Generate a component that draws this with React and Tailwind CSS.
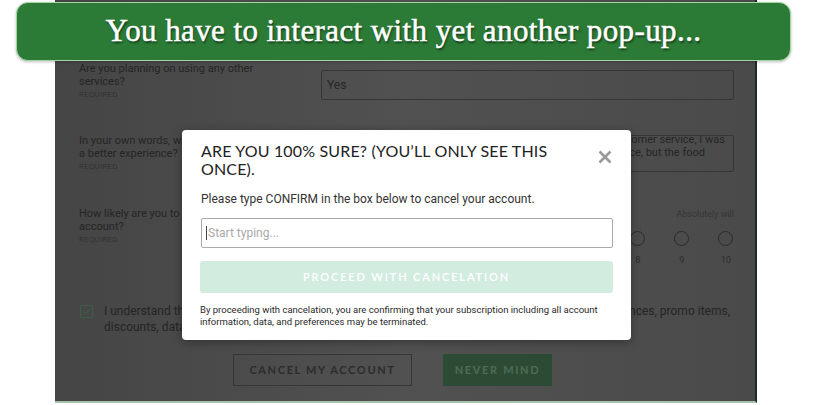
import React from "react";

// Dimmed form behind the modal (colours already include the dark overlay)
const labelCls = "text-[11px] leading-[13px] text-[#252525]";
const requiredCls = "mt-[2px] text-[8px] leading-[10px] tracking-wide text-[#333333]";

const Radio = ({ n }) => (
  <div className="flex w-[16px] flex-col items-center">
    <span className="h-[15px] w-[15px] rounded-full border border-[#2b2b2b]" />
    <span className="mt-[9px] text-[9px] leading-[10px] text-[#2e2e2e]">{n}</span>
  </div>
);

const BackgroundForm = () => (
  <div className="ml-[55px] h-[403px] w-[702px] border-r-2 border-b-2 border-r-[#1f2a23] border-b-[#a7c2ab] bg-gradient-to-r from-[#454545] via-[#515151] to-[#4a4a4a] pt-[62px] pl-[24px] font-['Roboto',sans-serif]">
    {/* Other services */}
    <div className="flex h-[72px] items-start">
      <div className="w-[242px]">
        <p className={labelCls}>
          Are you planning on using any other
          <br />
          services?
        </p>
        <p className={requiredCls}>REQUIRED</p>
      </div>
      <div className="mt-[8px] flex h-[30px] w-[413px] items-center rounded-[2px] border border-[#363636] px-[5px] text-[12px] text-[#262626]">
        Yes
      </div>
    </div>

    {/* Own words */}
    <div className="flex h-[73px] items-start">
      <div className="w-[242px]">
        <p className={labelCls}>
          In your own words, what could we do
          <br />
          a better experience?
        </p>
        <p className={requiredCls}>REQUIRED</p>
      </div>
      <div className="mt-[1px] h-[37px] w-[413px] overflow-hidden rounded-[2px] border border-[#363636] text-[11px] leading-[13px] text-[#262626]">
        <div className="-mt-[3px] flex flex-col items-end">
          <span className="whitespace-nowrap pr-[8px]">I liked the customer service, I was</span>
          <span className="whitespace-nowrap pr-[28px]">happy with the service, but the food</span>
        </div>
      </div>
    </div>

    {/* Likely scale */}
    <div className="flex h-[96px] items-start">
      <div className="w-[242px]">
        <p className={labelCls}>
          How likely are you to reactivate your
          <br />
          account?
        </p>
        <p className={requiredCls}>REQUIRED</p>
      </div>
      <div className="w-[413px]">
        <div className="flex justify-between pt-[2px] text-[9px] leading-[11px] text-[#363636]">
          <span className="pl-[2px]">Not likely</span>
          <span>Absolutely will</span>
        </div>
        <div className="mt-[11px] flex justify-between">
          {[1, 2, 3, 4, 5, 6, 7, 8, 9, 10].map((n) => (
            <Radio key={n} n={n} />
          ))}
        </div>
      </div>
    </div>

    {/* Understand checkbox */}
    <div className="flex items-start">
      <span className="mt-[2px] ml-[1px] flex h-[13px] w-[13px] items-center justify-center rounded-[1px] border border-[#3c5c44]">
        <svg width="9" height="9" viewBox="0 0 10 10" fill="none">
          <path d="M1.5 5.2 L4 7.6 L8.6 2.4" stroke="#3c5c44" strokeWidth="1.4" />
        </svg>
      </span>
      <div className="ml-[11px] w-[626px] text-[12px] leading-[16px] text-[#252525]">
        <div className="flex justify-between whitespace-nowrap">
          <span>I understand that I will lose</span>
          <span>my saved preferences, promo items,</span>
        </div>
        <div className="whitespace-nowrap">discounts, data, and credits.</div>
      </div>
    </div>

    {/* Actions */}
    <div className="mt-[19px] ml-[154px] flex gap-[31px] font-['Lato',sans-serif] text-[11px] font-bold tracking-[0.15em] whitespace-nowrap">
      <div className="flex h-[32px] w-[179px] items-center justify-center border border-[#363636] text-[#2c2c2c]">
        CANCEL MY ACCOUNT
      </div>
      <div className="flex h-[32px] w-[109px] items-center justify-center bg-[#2c4b35] text-[#4d6b56]">
        NEVER MIND
      </div>
    </div>
  </div>
);

const ConfirmModal = () => (
  <div className="absolute top-[130px] left-[182px] h-[210px] w-[449px] rounded-[4px] bg-white pt-[12px] pr-[18px] pl-[19px] shadow-[0_2px_10px_rgba(0,0,0,0.35)]">
    <div className="flex items-start justify-between">
      <h2 className="font-['Lato',sans-serif] text-[16px] leading-[18px] tracking-[0.01em] text-[#222222]">
        ARE YOU 100% SURE? (YOU&rsquo;LL ONLY SEE THIS
        <br />
        ONCE).
      </h2>
      <svg width="14" height="14" viewBox="0 0 14 14" className="mt-[8px] mr-[1px]">
        <path d="M1.5 1.5 L12.5 12.5 M12.5 1.5 L1.5 12.5" stroke="#9a9a9a" strokeWidth="2.6" />
      </svg>
    </div>
    <p className="mt-[14px] font-['Roboto',sans-serif] text-[12px] leading-[14px] text-[#333333]">
      Please type CONFIRM in the box below to cancel your account.
    </p>
    <div className="mt-[12px] flex h-[30px] w-[412px] items-center rounded-[2px] border border-[#a9a9a9] px-[4px] font-['Roboto',sans-serif] text-[12px] text-[#a8a8a8]">
      <span className="mr-[1px] h-[14px] w-px bg-[#444444]" />
      Start typing...
    </div>
    <div className="mt-[13px] -ml-px flex h-[32px] w-[413px] items-center justify-center rounded-[3px] bg-[#d3ece0] font-['Lato',sans-serif] text-[11px] font-semibold tracking-[0.17em] text-white">
      PROCEED WITH CANCELATION
    </div>
    <p className="mt-[11px] -ml-px font-['Roboto',sans-serif] text-[9.5px] leading-[12px] text-[#2a2a2a]">
      By proceeding with cancelation, you are confirming that your subscription including all account
      <br />
      information, data, and preferences may be terminated.
    </p>
  </div>
);

export default function App() {
  return (
    <div className="relative h-[405px] w-[814px] overflow-hidden bg-white">
      <BackgroundForm />
      <ConfirmModal />

      {/* Caption banner */}
      <div className="absolute top-[2px] left-[16px] flex h-[59px] w-[775px] items-center justify-center rounded-[12px] border border-[#a3d6a5] bg-[#2b7a36] shadow-[0_1px_3px_rgba(0,0,0,0.25)]">
        <h1 className="font-['Liberation_Serif',serif] text-[31px] font-normal tracking-[0.4px] text-white [-webkit-text-stroke:0.5px_white] [text-shadow:1px_2px_2px_rgba(0,0,0,0.55)]">
          You have to interact with yet another pop-up...
        </h1>
      </div>
    </div>
  );
}
